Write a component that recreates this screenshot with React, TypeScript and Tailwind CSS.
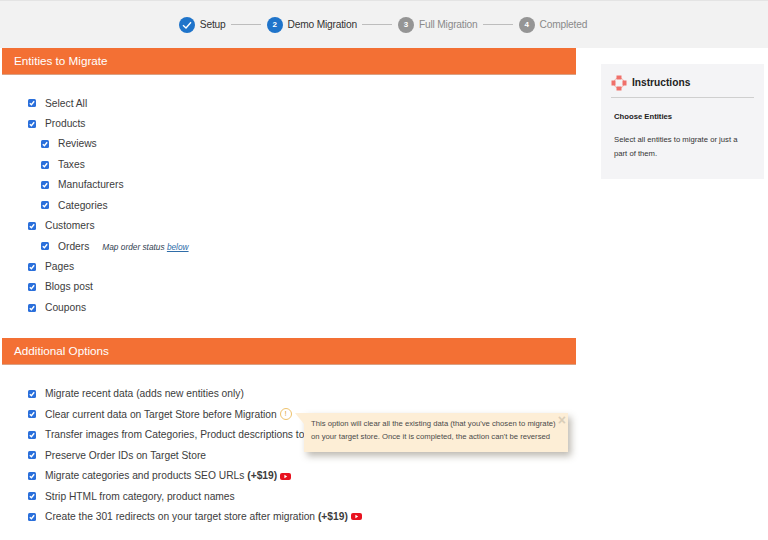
import type { ReactNode } from "react";

type Row = { label: ReactNode; sub?: boolean };

const entities: Row[] = [
  { label: "Select All" },
  { label: "Products" },
  { label: "Reviews", sub: true },
  { label: "Taxes", sub: true },
  { label: "Manufacturers", sub: true },
  { label: "Categories", sub: true },
  { label: "Customers" },
  {
    label: (
      <>
        Orders
        <span className="ml-[13px] text-[8.3px] italic text-[#30404f]">
          Map order status <span className="text-[#2f6da8] underline">below</span>
        </span>
      </>
    ),
    sub: true,
  },
  { label: "Pages" },
  { label: "Blogs post" },
  { label: "Coupons" },
];

const steps = [
  { n: "2", label: "Demo Migration", active: true },
  { n: "3", label: "Full Migration", active: false },
  { n: "4", label: "Completed", active: false },
];

function Check() {
  return (
    <span className="flex h-2 w-2 shrink-0 items-center justify-center rounded-[1.5px] bg-[#2a6fdb]">
      <svg viewBox="0 0 8 8" className="h-2 w-2" fill="none" stroke="white" strokeWidth="1.4">
        <path d="M1.8 4.2 3.4 5.8 6.2 2.2" />
      </svg>
    </span>
  );
}

function CheckRow({ label, sub }: Row) {
  return (
    <div className={`flex h-[20.45px] items-center ${sub ? "pl-[39px]" : "pl-[26px]"}`}>
      <Check />
      <div className="ml-[9px] whitespace-nowrap">{label}</div>
    </div>
  );
}

function YouTube() {
  return (
    <svg viewBox="0 0 11 7" className="ml-[3px] inline-block h-[7px] w-[11px] align-[-0.5px]">
      <rect width="11" height="7" rx="2" fill="#e8121f" />
      <path d="M4.4 1.8 7.2 3.5 4.4 5.2Z" fill="white" />
    </svg>
  );
}

function Bar({ title }: { title: string }) {
  return (
    <div className="flex h-[27px] items-center border-b border-[#d9a184] bg-[#f37034] pl-[12px] text-[11.7px] text-white">
      {title}
    </div>
  );
}

function StepCircle({ active, children }: { active: boolean; children: ReactNode }) {
  return (
    <span
      className={`flex h-4 w-4 shrink-0 items-center justify-center rounded-full text-[8px] font-bold text-white ${
        active ? "bg-[#1f74ca]" : "bg-[#959595]"
      }`}
    >
      {children}
    </span>
  );
}

function Lifebuoy() {
  return (
    <svg viewBox="0 0 16 16" className="h-4 w-4 shrink-0">
      <circle cx="8" cy="8" r="5.2" fill="none" stroke="#f3b5ad" strokeWidth="1" />
      <rect x="5.5" y="0.5" width="5" height="4" fill="#f0706a" />
      <rect x="5.5" y="11.5" width="5" height="4" fill="#f0706a" />
      <rect x="0.5" y="5.5" width="4" height="5" fill="#f0706a" />
      <rect x="11.5" y="5.5" width="4" height="5" fill="#f0706a" />
    </svg>
  );
}

export default function App() {
  return (
    <div className="h-[540px] w-[768px] overflow-hidden bg-white font-['Liberation_Sans',Arial,sans-serif] text-[10.25px] text-[#3c3c3c]">
      <header className="flex h-[48px] items-center justify-center gap-[5px] border-t border-[#e4e4e4] bg-[#f2f2f2] pr-[2px] text-[10.2px] tracking-[-0.18px]">
        <StepCircle active>
          <svg viewBox="0 0 16 16" className="h-4 w-4" fill="none" stroke="white" strokeWidth="1.4">
            <path d="M4 8.2 7 11 12 5.2" />
          </svg>
        </StepCircle>
        <span className="text-[#333]">Setup</span>
        <span className="h-px w-[30px] bg-[#bdbdbd]" />
        {steps.map((s) => (
          <div key={s.n} className="ml-px flex items-center gap-[5px]">
            <StepCircle active={s.active}>{s.n}</StepCircle>
            <span className={s.active ? "text-[#333]" : "text-[#8a8a8a]"}>{s.label}</span>
            {s.n !== "4" && <span className="h-px w-[30px] bg-[#bdbdbd]" />}
          </div>
        ))}
      </header>

      <div className="flex items-start">
        <main className="ml-[2px] w-[574px]">
          <Bar title="Entities to Migrate" />
          <div className="pt-[18px]">
            {entities.map((row, i) => (
              <CheckRow key={i} {...row} />
            ))}
          </div>

          <div className="mt-[20px]">
            <Bar title="Additional Options" />
          </div>
          <div className="relative pt-[19px]">
            <CheckRow label="Migrate recent data (adds new entities only)" />
            <CheckRow
              label={
                <span className="flex items-center">
                  Clear current data on Target Store before Migration
                  <span className="ml-[3px] flex h-[12px] w-[12px] items-center justify-center rounded-full border border-[#eec26c] text-[8px] text-[#e0a83e]">
                    !
                  </span>
                </span>
              }
            />
            <CheckRow label="Transfer images from Categories, Product descriptions to" />
            <CheckRow label="Preserve Order IDs on Target Store" />
            <CheckRow
              label={
                <>
                  Migrate categories and products SEO URLs <b>(+$19)</b>
                  <YouTube />
                </>
              }
            />
            <CheckRow label="Strip HTML from category, product names" />
            <CheckRow
              label={
                <>
                  Create the 301 redirects on your target store after migration <b>(+$19)</b>
                  <YouTube />
                </>
              }
            />

            <div className="absolute left-[302px] top-[48px] h-[39px] w-[264px] bg-[#fdeed6] pl-[7px] pt-[4px] text-[7.7px] leading-[13.5px] text-[#4a4a4a] shadow-[3px_4px_7px_rgba(90,80,60,0.4)]">
              <span className="absolute -left-[9px] top-0 h-0 w-0 border-l-[9px] border-t-[11px] border-l-transparent border-t-[#fdeed6]" />
              <span className="absolute right-[2px] top-0 text-[14px] font-bold leading-[14px] text-[#d9cdb8]">×</span>
              <div className="whitespace-nowrap">This option will clear all the existing data (that you've chosen to migrate)</div>
              <div className="whitespace-nowrap">on your target store. Once it is completed, the action can't be reversed</div>
            </div>
          </div>
        </main>

        <aside className="ml-[25px] mt-[16px] h-[115px] w-[163px] bg-[#f4f4f6] px-[10px] pt-[6px]">
          <div className="flex h-[27px] items-center gap-[5px] pb-[1px] text-[10.2px] font-bold text-[#222]">
            <Lifebuoy />
            Instructions
          </div>
          <div className="h-px w-[143px] bg-[#cfcfcf]" />
          <div className="pl-[3px] pt-[12px] text-[7.7px] leading-[14px] text-[#333]">
            <div className="font-bold text-[#222]">Choose Entities</div>
            <p className="mt-[9px] w-[130px]">Select all entities to migrate or just a part of them.</p>
          </div>
        </aside>
      </div>
    </div>
  );
}
